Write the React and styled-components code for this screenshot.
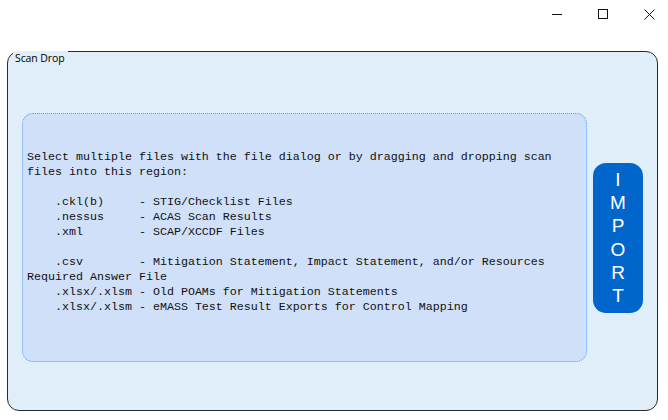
import styled, { createGlobalStyle } from 'styled-components';

const GlobalStyle = createGlobalStyle`
  html, body {
    margin: 0;
    padding: 0;
    background: #ffffff;
  }
  body {
    font-family: "Liberation Sans", Arial, sans-serif;
  }
`;

const fileLines = [
  'Select multiple files with the file dialog or by dragging and dropping scan',
  'files into this region:',
  '',
  '    .ckl(b)     - STIG/Checklist Files',
  '    .nessus     - ACAS Scan Results',
  '    .xml        - SCAP/XCCDF Files',
  '',
  '    .csv        - Mitigation Statement, Impact Statement, and/or Resources',
  'Required Answer File',
  '    .xlsx/.xlsm - Old POAMs for Mitigation Statements',
  '    .xlsx/.xlsm - eMASS Test Result Exports for Control Mapping',
];

const App = () => {
  return (
    <Window>
      <GlobalStyle />
      <TitleBar>
        <CaptionButton aria-label="Minimize">
          <svg width="10" height="10" viewBox="0 0 10 10">
            <path d="M0 5.5 H10" stroke="#111" strokeWidth="1" />
          </svg>
        </CaptionButton>
        <CaptionButton aria-label="Maximize">
          <svg width="10" height="10" viewBox="0 0 10 10">
            <rect x="0.5" y="0.5" width="9" height="9" fill="none" stroke="#111" strokeWidth="1" />
          </svg>
        </CaptionButton>
        <CaptionButton aria-label="Close">
          <svg width="11" height="11" viewBox="0 0 11 11">
            <path d="M0.5 0.5 L10.5 10.5 M10.5 0.5 L0.5 10.5" stroke="#111" strokeWidth="1" />
          </svg>
        </CaptionButton>
      </TitleBar>
      <Group>
        <Legend>Scan Drop</Legend>
        <DropZone>
          <DropText>
            {fileLines.map((line, i) => (
              <Line key={i}>{line || ' '}</Line>
            ))}
          </DropText>
        </DropZone>
        <ImportButton>
          {'IMPORT'.split('').map((c, i) => (
            <Letter key={i}>{c}</Letter>
          ))}
        </ImportButton>
      </Group>
    </Window>
  );
};

const Window = styled.div`
  width: 668px;
  height: 420px;
  display: flex;
  flex-direction: column;
  overflow: hidden;
`;

const TitleBar = styled.div`
  height: 30px;
  display: flex;
  justify-content: flex-end;
  margin-right: -4px;
`;

const CaptionButton = styled.div`
  width: 46px;
  height: 30px;
  display: flex;
  align-items: center;
  justify-content: center;
  padding-bottom: 2px;
  box-sizing: border-box;
`;

const Group = styled.div`
  position: relative;
  margin: 21px 10px 0 7px;
  height: 360px;
  box-sizing: border-box;
  border: 1px solid #2b2b2b;
  border-radius: 12px;
  background: #e0eefa;
  padding: 61px 14px 48px 14px;
  display: flex;
  align-items: center;
  gap: 6px;
`;

const Legend = styled.div`
  position: absolute;
  top: -1px;
  left: 5px;
  height: 14px;
  padding: 0 3px 0 2px;
  background: #e0eefa;
  font-family: "Open Sans", "Liberation Sans", sans-serif;
  font-size: 10.5px;
  line-height: 15px;
  color: #000;
  letter-spacing: -0.1px;
`;

const DropZone = styled.div`
  width: 565px;
  height: 249px;
  box-sizing: border-box;
  border: 1px dotted #5f9fe6;
  border-radius: 11px;
  background: #d0e0f9;
  padding: 36px 0 0 4px;
`;

const DropText = styled.div`
  font-family: "Liberation Mono", "Courier New", monospace;
  font-size: 11.67px;
  line-height: 15px;
  color: #111;
  white-space: pre;
`;

const Line = styled.div`
  height: 15px;
`;

const ImportButton = styled.div`
  width: 50px;
  height: 150px;
  border-radius: 13px;
  background: #0066cc;
  display: flex;
  flex-direction: column;
  align-items: center;
  justify-content: center;
  color: #ffffff;
  font-family: "Liberation Sans", Arial, sans-serif;
  font-size: 19px;
  cursor: pointer;
`;

const Letter = styled.span`
  display: block;
  line-height: 23.2px;
  height: 23.2px;
`;

export default App;
